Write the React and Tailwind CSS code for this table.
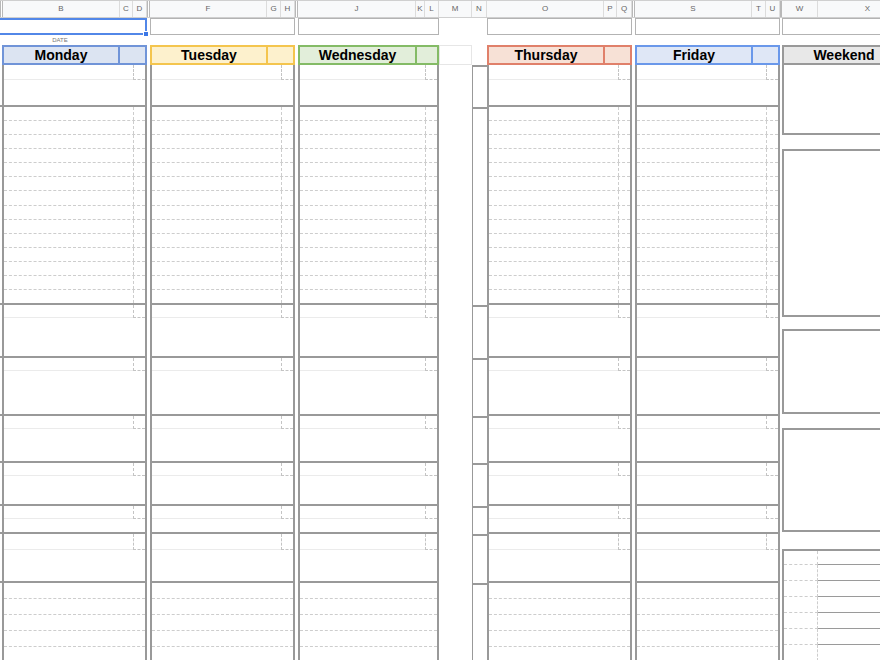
import React from "react";

// sheet column letters across the top
const headerCols = [
  { label: "", w: "w-[3px]", hidden: true },
  { label: "B", w: "w-[117px]" },
  { label: "C", w: "w-[13px]" },
  { label: "D", w: "w-[14px]" },
  { label: "", w: "w-[3px]", hidden: true },
  { label: "F", w: "w-[117px]" },
  { label: "G", w: "w-[14px]" },
  { label: "H", w: "w-[14px]" },
  { label: "", w: "w-[3px]", hidden: true },
  { label: "J", w: "w-[118px]" },
  { label: "K", w: "w-[9px]" },
  { label: "L", w: "w-[14px]" },
  { label: "M", w: "w-[33px]" },
  { label: "N", w: "w-[15px]" },
  { label: "O", w: "w-[117px]" },
  { label: "P", w: "w-[13px]" },
  { label: "Q", w: "w-[15px]" },
  { label: "", w: "w-[3px]", hidden: true },
  { label: "S", w: "w-[117px]" },
  { label: "T", w: "w-[14px]" },
  { label: "U", w: "w-[14px]" },
  { label: "", w: "w-[2px]", hidden: true },
  { label: "W", w: "w-[36px]" },
  { label: "X", w: "w-[100px]" },
];

// vertical blocks of every day column
const sections = [
  { kind: "event", h: "h-[40px]", cb: "h-[15px]" },
  { kind: "lined", h: "h-[198px]", rows: 14 },
  { kind: "event", h: "h-[53px]", cb: "h-[13px]" },
  { kind: "event", h: "h-[58px]", cb: "h-[13px]" },
  { kind: "event", h: "h-[47px]", cb: "h-[13px]" },
  { kind: "event", h: "h-[43px]", cb: "h-[13px]" },
  { kind: "event", h: "h-[28px]", cb: "h-[13px]" },
  { kind: "event", h: "h-[49px]", cb: "h-[16px]" },
  { kind: "notes", h: "h-[100px]", rows: 6 },
];

const days = [
  {
    name: "Thursday",
    group: "w-[145px]",
    bg: "bg-[#f7e1d6]",
    border: "border-[#e0806a]",
    right: "w-[27px]",
  },
  {
    name: "Friday",
    group: "w-[145px]",
    bg: "bg-[#dfe7f6]",
    border: "border-[#6a98ea]",
    right: "w-[27px]",
  },
];

const SectionBody = ({ s }) => {
  if (s.kind === "event") {
    return (
      <div className={`flex shrink-0 ${s.cb}`}>
        <div className="flex-1 border-b border-[#ebebeb]" />
        <div className="w-[12px] border-l border-b border-dashed border-[#c4c4c4]" />
      </div>
    );
  }
  if (s.kind === "lined") {
    return Array.from({ length: s.rows }).map((_, i) => (
      <div
        key={i}
        className={`flex flex-1 ${i === s.rows - 1 ? "" : "border-b border-dashed border-[#cdcdcd]"}`}
      >
        <div className="flex-1" />
        <div className="w-[12px] border-l border-dashed border-[#cdcdcd]" />
      </div>
    ));
  }
  return Array.from({ length: s.rows }).map((_, i) => (
    <div key={i} className="h-[16px] shrink-0 border-b border-dashed border-[#cdcdcd]" />
  ));
};

const Sections = ({ blank }) =>
  sections.map((s, i) => (
    <div
      key={i}
      className={`${s.h} shrink-0 flex flex-col ${i === 0 ? "" : "border-t-2 border-[#999]"}`}
    >
      {!blank && <SectionBody s={s} />}
    </div>
  ));

const DayHeader = ({ name, bg, border, right }) => (
  <div className={`flex h-[20px] shrink-0 border-2 ${border} ${bg}`}>
    <div className="flex flex-1 items-center justify-center text-[14px] font-bold leading-none text-black">
      {name}
    </div>
    <div className={`${right} border-l-2 ${border}`} />
  </div>
);

const DayBody = () => (
  <div className="flex flex-col border-x-2 border-[#999]">
    <Sections />
  </div>
);

const DayColumn = ({ name, group, bg, border, right, row1 }) => (
  <div className={`${group} flex shrink-0 flex-col`}>
    <div className={`h-[17px] shrink-0 ${row1 || "border border-[#b3b3b3]"}`} />
    <div className="h-[10px] shrink-0" />
    <DayHeader name={name} bg={bg} border={border} right={right} />
    <DayBody />
  </div>
);

const Gap = ({ w }) => <div className={`${w} shrink-0`} />;

const App = () => {
  return (
    <div className="relative h-[660px] w-[880px] overflow-hidden bg-white font-['Liberation_Sans',Arial,sans-serif]">
      {/* Column letters */}
      <div className="flex h-[18px] border-y border-[#cfcfcf] bg-[#f8f9fa]">
        {headerCols.map((c, i) => (
          <div
            key={i}
            className={`${c.w} shrink-0 flex items-center justify-center text-[8px] text-[#666] ${
              c.hidden ? "border-x border-[#b8b8b8] bg-white" : "border-r border-[#dcdcdc]"
            }`}
          >
            {c.label}
          </div>
        ))}
      </div>

      <div className="flex">
        {/* Monday */}
        <div className="flex w-[147px] shrink-0 flex-col">
          <div className="relative h-[17px] shrink-0 border-y-2 border-r-2 border-[#5287e8]">
            <div className="absolute -bottom-[4px] -right-[4px] h-[6px] w-[6px] border border-white bg-[#3b78e7]" />
          </div>
          <div className="flex h-[10px] shrink-0 items-center">
            <div className="w-[120px] text-center text-[6px] leading-none text-[#777]">DATE</div>
          </div>
          <div className="flex">
            <div className="flex w-[2px] shrink-0 flex-col">
              <div className="h-[20px] shrink-0" />
              <Sections blank />
            </div>
            <div className="flex flex-1 flex-col">
              <DayHeader name="Monday" bg="bg-[#dce4f2]" border="border-[#7094d8]" right="w-[27px]" />
              <DayBody />
            </div>
          </div>
        </div>

        <Gap w="w-[3px]" />
        <DayColumn
          name="Tuesday"
          group="w-[145px]"
          bg="bg-[#fdf1cd]"
          border="border-[#f4c54e]"
          right="w-[27px]"
        />
        <Gap w="w-[3px]" />
        <DayColumn
          name="Wednesday"
          group="w-[141px]"
          bg="bg-[#e2eeda]"
          border="border-[#84bb66]"
          right="w-[22px]"
        />

        {/* M column */}
        <div className="flex w-[33px] shrink-0 flex-col">
          <div className="h-[27px] shrink-0" />
          <div className="h-[20px] shrink-0 border border-[#e6e6e6]" />
        </div>

        {/* N column */}
        <div className="flex w-[15px] shrink-0 flex-col">
          <div className="h-[47px] shrink-0" />
          <div className="flex flex-col border-l border-t-2 border-[#999]">
            <Sections blank />
          </div>
        </div>

        <DayColumn {...days[0]} />
        <Gap w="w-[3px]" />
        <DayColumn
          {...days[1]}
          row1="flex justify-end border border-[#b3b3b3]"
        />
        <Gap w="w-[2px]" />

        {/* Weekend */}
        <div className="flex w-[124px] shrink-0 flex-col">
          <div className="h-[17px] shrink-0 border border-[#b3b3b3]" />
          <div className="h-[10px] shrink-0" />
          <div className="flex h-[20px] shrink-0 items-center justify-center border-2 border-[#999] bg-[#e8e8e8] text-[14px] font-bold leading-none text-black">
            Weekend
          </div>
          <div className="h-[70px] shrink-0 border-x-2 border-b-2 border-[#999]" />
          <div className="h-[14px] shrink-0" />
          <div className="h-[168px] shrink-0 border-2 border-[#999]" />
          <div className="h-[12px] shrink-0" />
          <div className="h-[85px] shrink-0 border-2 border-[#999]" />
          <div className="h-[14px] shrink-0" />
          <div className="h-[104px] shrink-0 border-2 border-[#999]" />
          <div className="h-[17px] shrink-0" />
          <div className="flex flex-col border-l-2 border-t-2 border-[#999]">
            <div className="flex h-[14px] shrink-0">
              <div className="w-[34px] border-r border-b border-dashed border-[#cdcdcd]" />
              <div className="flex-1 border-b border-[#9a9a9a]" />
            </div>
            {Array.from({ length: 6 }).map((_, i) => (
              <div key={i} className="flex h-[16px] shrink-0">
                <div className="w-[34px] border-r border-b border-dashed border-[#cdcdcd]" />
                <div className="flex-1 border-b border-[#9a9a9a]" />
              </div>
            ))}
          </div>
        </div>
      </div>
    </div>
  );
};

export default App;
